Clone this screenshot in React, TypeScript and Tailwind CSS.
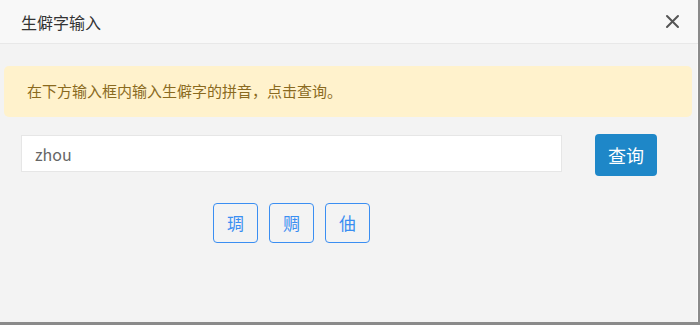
import React, { useState } from 'react';

const App: React.FC = () => {
  const [value, setValue] = useState('zhou');
  const list = ['琱', '赒', '伷'];

  return (
    <div className="w-[700px] h-[325px] overflow-hidden bg-[#f3f3f3] border-r-2 border-b-[3px] border-[#8a8a8a] flex flex-col font-['Noto_Sans_CJK_SC','Noto_Sans',sans-serif]">
      {/* -- Header -- */}
      <div className="h-[44px] shrink-0 bg-[#f8f8f8] border-b border-[#e8e8e8] flex items-center justify-between pl-[21px] pr-[18px]">
        <span className="text-[16px] text-[#333]">生僻字输入</span>
        <button className="text-[#555] w-[16px] h-[16px] flex items-center justify-center" aria-label="close">
          <svg width="15" height="15" viewBox="0 0 15 15" fill="none" stroke="currentColor" strokeWidth="2" strokeLinecap="round">
            <path d="M2 2 L13 13 M13 2 L2 13" />
          </svg>
        </button>
      </div>

      {/* -- Body -- */}
      <div className="flex-1 pt-[22px] border-r border-[#fafafa]">
        <div className="mx-[4px] mr-[5px] h-[51px] rounded-[5px] bg-[#fff2cc] flex items-center pl-[23px] text-[15px] text-[#8a6a1e]">
          在下方输入框内输入生僻字的拼音，点击查询。
        </div>

        <div className="flex items-start mt-[17px] pl-[21px]">
          <input
            value={value}
            onChange={(e) => setValue(e.target.value)}
            className="mt-[1px] w-[541px] h-[37px] bg-white border border-[#e6e6e6] px-[13px] text-[16px] text-[#666] outline-none"
          />
          <button className="ml-[33px] w-[62px] h-[42px] rounded-[4px] bg-[#1e87c8] text-white text-[18px]">
            查询
          </button>
        </div>

        <div className="w-[541px] ml-[21px] mt-[27px] flex justify-center gap-[11px]">
          {list.map((c) => (
            <button
              key={c}
              className="w-[45px] h-[40px] rounded-[4px] border-[1.5px] border-[#3a8ef2] text-[#3a8ef2] text-[17px] flex items-center justify-center"
            >
              {c}
            </button>
          ))}
        </div>
      </div>
    </div>
  );
};

export default App;
